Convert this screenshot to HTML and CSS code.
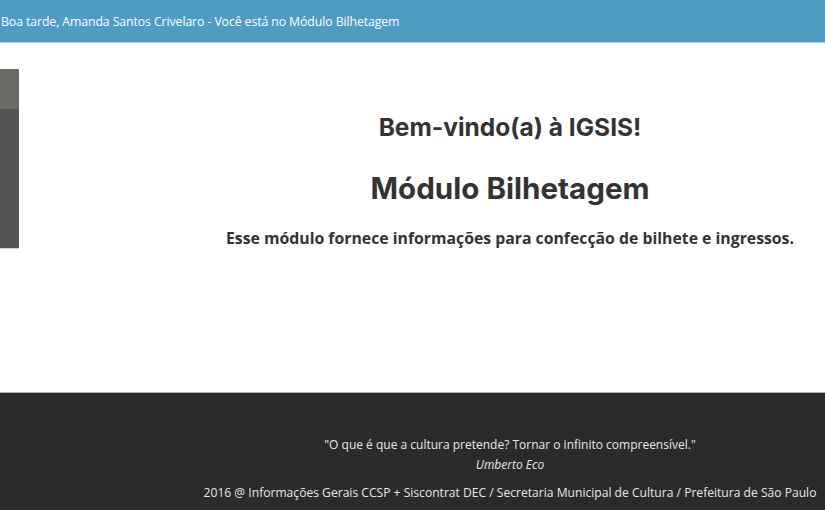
FILE: index.html
```html
<!DOCTYPE html>
<html lang="pt-BR">
<head>
<meta charset="utf-8">
<title>IGSIS - Bilhetagem</title>
<link rel="stylesheet" href="styles.css">
</head>
<body>
<header class="topbar">
  <p class="greeting">Boa tarde, Amanda Santos Crivelaro - Você está no Módulo Bilhetagem</p>
</header>
<div class="page">
  <aside class="sidebar">
    <div class="side-top"></div>
    <div class="side-body"></div>
  </aside>
  <main class="content">
    <h2 class="welcome">Bem-vindo(a) à IGSIS!</h2>
    <h1 class="module">Módulo Bilhetagem</h1>
    <p class="desc">Esse módulo fornece informações para confecção de bilhete e ingressos.</p>
  </main>
</div>
<footer class="footer">
  <p class="quote">"O que é que a cultura pretende? Tornar o infinito compreensível."</p>
  <p class="author">Umberto Eco</p>
  <p class="credits">2016 @ Informações Gerais CCSP + Siscontrat DEC / Secretaria Municipal de Cultura / Prefeitura de São Paulo</p>
</footer>
</body>
</html>
```
FILE: styles.css
```css
* { box-sizing: border-box; }
html, body { margin: 0; padding: 0; }
body {
  font-family: "Open Sans", "Liberation Sans", sans-serif;
  background: #ffffff;
  color: #333333;
  width: 825px;
  height: 510px;
  overflow: hidden;
}
.topbar {
  height: 43px;
  background: #4f9bc1;
  border-bottom: 1px solid #a9cfe2;
  display: flex;
  align-items: center;
}
.greeting {
  margin: 0;
  padding-left: 1px;
  color: #ffffff;
  font-size: 12.3px;
  letter-spacing: -0.1px;
}
.page {
  display: flex;
  height: 349px;
  padding-top: 26px;
}
.sidebar {
  width: 19px;
  height: 180px;
  display: flex;
  flex-direction: column;
  border-bottom: 1px solid #cfcfcf;
}
.side-top { height: 40px; background: #6b6b66; }
.side-body { flex: 1; background: #545454; }
.content {
  flex: 1;
  padding-left: 176px;
  display: flex;
  flex-direction: column;
  align-items: center;
  padding-top: 43px;
}
.welcome {
  margin: 0;
  font-family: "Inter", "Noto Sans", sans-serif;
  font-weight: 700;
  font-size: 24.5px;
  line-height: 30px;
  color: #333333;
}
.module {
  margin: 28px 0 0 0;
  font-family: "Inter", "Noto Sans", sans-serif;
  font-weight: 700;
  font-size: 29.6px;
  line-height: 36px;
  color: #333333;
}
.desc {
  margin: 21px 0 0 0;
  font-family: "Open Sans", sans-serif;
  font-weight: 700;
  font-size: 15.8px;
  line-height: 22px;
  color: #333333;
}
.footer {
  height: 118px;
  background: #2b2b2b;
  border-top: 1px solid #b0b0b0;
  display: flex;
  flex-direction: column;
  align-items: center;
  padding-left: 195px;
  padding-top: 42px;
  color: #e6e6e6;
  font-size: 12px;
}
.footer p { margin: 0; line-height: 20px; }
.author { font-style: italic; }
.credits { margin-top: 8px !important; letter-spacing: 0; font-size: 12.1px; }
```
